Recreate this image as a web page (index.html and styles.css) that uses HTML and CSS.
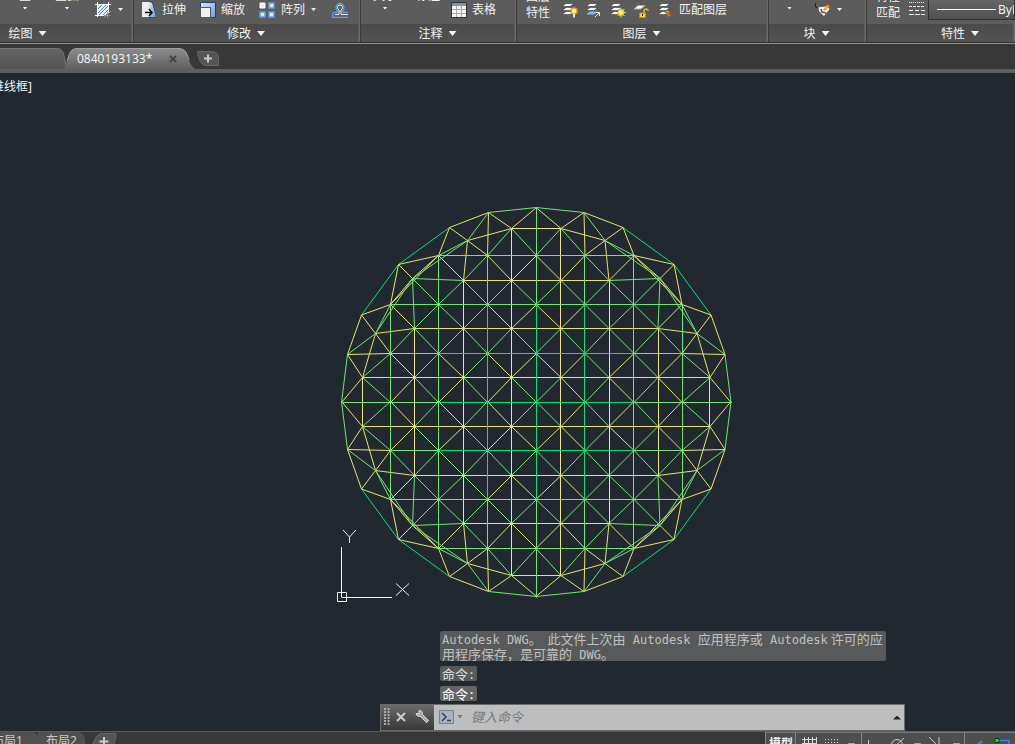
FILE: index.html
```html
<!DOCTYPE html>
<html lang="zh-CN">
<head>
<meta charset="utf-8">
<title>0840193133</title>
<link rel="stylesheet" href="styles.css">
</head>
<body>
<svg class="defs" aria-hidden="true">
  <defs>
    <linearGradient id="blueFill" x1="0" y1="0" x2="1" y2="1"><stop offset="0" stop-color="#dce9fb"/><stop offset="1" stop-color="#5f9be8"/></linearGradient>
    <linearGradient id="tabFill" x1="0" y1="0" x2="0" y2="1"><stop offset="0" stop-color="#8c8c8c"/><stop offset="1" stop-color="#5e5e5e"/></linearGradient>
    <linearGradient id="tabDim" x1="0" y1="0" x2="0" y2="1"><stop offset="0" stop-color="#646464"/><stop offset="1" stop-color="#545454"/></linearGradient>
    <g id="stack">
      <path d="M5 1.500h8l-4 3H1zM5 5.500h8l-4 3H1zM5 9.500h8l-4 3H1z" fill="#fff" stroke="#333" stroke-width=".6"/>
    </g>
  </defs>
</svg>

<header class="ribbon">
  <section class="panel first">
    <div class="tools tools-draw">
      <button class="tall circle"><span>圆</span><i class="caret"></i></button>
      <button class="tall arc"><span>圆弧</span><i class="caret"></i></button>
      <button class="tool hatch" aria-label="图案填充">
        <svg width="18" height="18" viewBox="0 0 18 18"><path d="M4 4h10v10H4z" fill="#e8f0fb"/><path d="M4 8l4-4M4 12l8-8M5 14l9-9M9 14l5-5M12 14l2-2" stroke="#4f83d6" stroke-width="1"/><path d="M3.500 1v15M14.500 1v11M1 3.500h16M1 14.500h10" stroke="#fff" stroke-width="1" fill="none"/><path d="M10 17l7-7M10 14.500h6M13.500 11v6" stroke="#5b9bf0" stroke-width="1"/></svg>
        <i class="caret"></i>
      </button>
    </div>
    <button class="panel-title">绘图<i class="caret big"></i></button>
  </section>

  <section class="panel">
    <div class="tools">
      <button class="tool"><svg width="16" height="17" viewBox="0 0 16 17"><path d="M7 1h4l4 15H7z" fill="#8fb9e8" stroke="#1f3d66"/><path d="M1 1h7v15H1z" fill="#eee"/><path d="M8 1l3 1 4 14H8z" fill="url(#blueFill)"/><path d="M4 11.500h6M8 8l3 3.500L8 15" stroke="#000" stroke-width="1.500" fill="none"/></svg>拉伸</button>
      <button class="tool"><svg width="16" height="16" viewBox="0 0 16 16"><path d="M.5.500h15v15h-5v-10H.5z" fill="url(#blueFill)" stroke="#26406b"/><path d="M.5 5.500h10v10H.5z" fill="#f1f1f1" stroke="#555"/></svg>缩放</button>
      <button class="tool array"><svg width="16" height="16" viewBox="0 0 16 16"><path d="M1 1h5v5H1z" fill="#eee" stroke="#fff"/><path d="M10 1h5v5h-5zM1 10h5v5H1zM10 10h5v5h-5z" fill="#dfeafa" stroke="#5f9cf3" stroke-width="1.500"/></svg>阵列<i class="caret"></i></button>
      <button class="tool offset" aria-label="偏移"><svg width="16" height="16" viewBox="0 0 16 16"><path d="M16 15.300H.7v-3q0-2 2-2h2.500V8.500Q4 7.500 4 5.500a4 4 0 0 1 8 0q0 2-1.200 3v1.800H16" fill="none" stroke="#5f9cf3" stroke-width="1.300"/><path d="M16 12.500H9V8q1.500-1 1.500-2.500a2.500 2.500 0 0 0-5 0Q5.500 7 7 8v4.500H3" fill="none" stroke="#eee" stroke-width="1"/></svg></button>
    </div>
    <button class="panel-title">修改<i class="caret big"></i></button>
  </section>

  <section class="panel">
    <div class="tools tools-note">
      <button class="tall"><span>文字</span><i class="caret"></i></button>
      <button class="tall dim"><span>标注</span></button>
      <button class="tool table-tool"><svg width="16" height="16" viewBox="0 0 16 16"><path d="M.5.500h15v15H.5z" fill="#f4f4f4" stroke="#333"/><path d="M1 1h14v3H1z" fill="#7d93b3"/><path d="M1 7.500h14M1 11.500h14M5.500 4v11M10.500 4v11" stroke="#aaa"/></svg>表格</button>
    </div>
    <button class="panel-title">注释<i class="caret big"></i></button>
  </section>

  <section class="panel">
    <div class="tools tools-layer">
      <button class="two-line">图层<br>特性</button>
      <div class="icon-row">
        <button class="tool" aria-label="关闭图层"><svg width="17" height="16" viewBox="0 0 17 16"><use href="#stack"/><circle cx="13" cy="9" r="3" fill="#fff2a0" stroke="#f29a1f" stroke-width="1.500"/><path d="M13 11.500v4" stroke="#ddd" stroke-width="2"/></svg></button>
        <button class="tool" aria-label="置为当前"><svg width="17" height="16" viewBox="0 0 17 16"><use href="#stack"/><path d="M5 9.500h8l-4 3H1z" fill="#80b4f5"/><path d="M10 15l4-4M11 10.500h3.500V14" stroke="#eee" fill="none"/></svg></button>
        <button class="tool" aria-label="冻结图层"><svg width="17" height="16" viewBox="0 0 17 16"><use href="#stack"/><path d="M12 5.500v10M7 10.500h10M8.500 7l7 7M15.500 7l-7 7" stroke="#f7dc65" stroke-width="1"/><circle cx="12" cy="10.500" r="3" fill="#fff06a" stroke="#f2b93b"/></svg></button>
        <button class="tool" aria-label="锁定图层"><svg width="17" height="16" viewBox="0 0 17 16"><path d="M5 3.500h7L8 7H1z" fill="#fff" stroke="#aaa"/><path d="M11 11V9q0-2 2-2t2 2" stroke="#f0b90c" stroke-width="1.500" fill="none"/><path d="M6.500 11h6v4.500h-6z" fill="#ffd633" stroke="#c98b00"/><path d="M9.500 12v2" stroke="#000"/></svg></button>
        <button class="tool match"><svg width="17" height="16" viewBox="0 0 17 16"><use href="#stack"/><path d="M7 10l5 5 3-3-4-4z" fill="#c47a32"/><path d="M12 11l2 1 2-3" stroke="#9c4c16" stroke-width="2" fill="none"/></svg>匹配图层</button>
      </div>
    </div>
    <button class="panel-title">图层<i class="caret big"></i></button>
  </section>

  <section class="panel">
    <div class="tools tools-block">
      <button class="tall" aria-label="插入"><i class="caret"></i></button>
      <button class="tool attr" aria-label="编辑属性"><svg width="18" height="16" viewBox="0 0 18 16"><path d="M1.500 1v4l3 1" stroke="#222" fill="none"/><path d="M4 5l9-1 3 3-6 7.500-5-5z" fill="#f5f5f5" stroke="#444" stroke-width=".6"/><path d="M7 7l1 3 4 1" stroke="#555" fill="none" stroke-width="1.500"/><path d="M9 8l5-6 2 2-5 5z" fill="#f3a72b"/><path d="M14 2l2 2" stroke="#d43b20" stroke-width="2"/></svg><i class="caret"></i></button>
    </div>
    <button class="panel-title">块<i class="caret big"></i></button>
  </section>

  <section class="panel last">
    <div class="tools tools-props">
      <button class="two-line">特性<br>匹配</button>
      <svg class="linetypes" width="16" height="16" viewBox="0 0 16 16"><path d="M0 2.500h16" stroke="#eee" stroke-dasharray="1 1"/><path d="M0 6.500h16" stroke="#eee" stroke-dasharray="3 1"/><path d="M0 10.500h16" stroke="#eee" stroke-dasharray="4 2"/><path d="M0 14.500h16" stroke="#eee" stroke-dasharray="5 1"/></svg>
      <button class="linetype"><span class="sample"></span>ByLayer</button>
    </div>
    <button class="panel-title">特性<i class="caret big"></i></button>
  </section>
</header>

<nav class="tabs">
  <button class="tab previous" aria-label="上一图形">
    <svg width="68" height="22" viewBox="0 0 68 22"><path d="M-2 .500h59q6 0 7 7l1 5q1 5 3 9.500H-2z" fill="url(#tabDim)" stroke="#757575"/></svg>
  </button>
  <button class="tab active">
    <svg width="138" height="22" viewBox="0 0 138 22"><path d="M0 22q3-2 5-9l2-6q2-6.500 8-6.500h102q6 0 8 6l3 8q2 6 8 7.500z" fill="url(#tabFill)"/><path d="M5 13l2-6q2-6.500 8-6.500h102q6 0 8 6l2 5" fill="none" stroke="#a0a0a0"/></svg>
    <span class="tab-name">0840193133*</span>
    <svg class="tab-close" width="8" height="8" viewBox="0 0 8 8"><path d="M1 1l6 6M7 1L1 7" stroke="#454545" stroke-width="2"/></svg>
  </button>
  <button class="new-tab" aria-label="新图形">
    <svg width="22" height="15" viewBox="0 0 22 15"><path d="M.5.500h14q7 0 7 7v7H9Q2 14 .5.500z" fill="#545454" stroke="#666"/><path d="M11 3.500v8M7 7.500h8" stroke="#ccc" stroke-width="2"/></svg>
  </button>
</nav>

<main class="canvas">
  <div class="view-label">二维线框]</div>

  <svg class="mesh" width="400" height="400" viewBox="336 200 400 400">
    <defs>
      <g id="quarter">
        <path class="teal" d="M449.500 227.500L398.500 264.500 361.500 315"/>
        <path class="yellow" d="M488.500 212.500L449.500 227.500M361.500 315L347.500 354.500
          M536.500 207.500L511.500 228.500 488.500 212.500L487.500 255.500M449.500 227.500L467.500 240.500M449.500 227.500L438.500 255.500 398.500 264.500 390.500 304.500 361.500 315 375.500 333.500
          M398.500 264.500L412.500 278.500M347.500 354.500L362.500 377.500 341.500 402.500M347.500 354.500L390.500 353.500
          M511.500 228.500L467.500 240.500M375.500 333.500L362.500 377.500M438.500 255.500L412.500 278.500 390.500 304.500zM467.500 240.500L487.500 255.500M467.500 240.500L463.500 280.500M375.500 333.500L390.500 353.500M375.500 333.500L414.500 328.500
          M438.500 255.500L463.500 280.500M487.500 255.500L511.500 280.500 536.500 255.500
          M390.500 304.500L414.500 328.500M487.500 304.500L511.500 328.500 536.500 304.500
          M390.500 353.500L414.500 377.500 390.500 402.500M438.500 353.500L463.500 377.500 438.500 402.500M487.500 353.500L511.500 377.500 536.500 353.500M511.500 377.500L487.500 402.500"/>
        <path class="green" d="M536.500 207.500L488.500 212.500 467.500 240.500 412.500 278.500 375.500 333.500 347.500 354.500 341.500 402.500
          M467.500 240.500L438.500 255.500M375.500 333.500L390.500 304.500M463.500 280.500L412.500 278.500 414.500 328.500M412.500 278.500L438.500 304.500
          M487.500 255.500L511.500 228.500 536.500 255.500M487.500 255.500L463.500 280.500 438.500 304.500M463.500 280.500L487.500 304.500 511.500 280.500 536.500 304.500
          M390.500 353.500L414.500 328.500 438.500 304.500 463.500 328.500 487.500 304.500M414.500 328.500L438.500 353.500 463.500 328.500 487.500 353.500 511.500 328.500 536.500 353.500
          M390.500 353.500L362.500 377.500 390.500 402.500M438.500 353.500L414.500 377.500 438.500 402.500M487.500 353.500L463.500 377.500 487.500 402.500M511.500 377.500L536.500 402.500"/>
      </g>
    </defs>
    <use href="#quarter"/>
    <use href="#quarter" transform="translate(1072.500 0) scale(-1 1)"/>
    <use href="#quarter" transform="translate(0 804) scale(1 -1)"/>
    <use href="#quarter" transform="translate(1072.500 804) scale(-1 -1)"/>
    <path class="yellow" d="M511.500 228.500H560.500M463.500 280.500H609.500M414.500 328.500H658.500M362.500 377.500H709.500M362.500 426.500H709.500M414.500 475.500H658.500M463.500 523.500H609.500M511.500 575.500H560.500"/>
    <path class="pale" d="M362.500 377.500V426.500M414.500 328.500V475.500M463.500 280.500V523.500M511.500 228.500V575.500M560.500 228.500V575.500M609.500 280.500V523.500M658.500 328.500V475.500M709.500 377.500V426.500"/>
    <path class="green" d="M438.500 255.500H633.500M390.500 304.500H682.500M390.500 353.500H682.500M341.500 402.500H731.500M390.500 450.500H682.500M390.500 499.500H682.500M438.500 548.500H633.500
      M390.500 304.500V499.500M438.500 255.500V548.500M487.500 255.500V548.500M536.500 207.500V597.500M584.500 255.500V548.500M633.500 255.500V548.500M682.500 304.500V499.500"/>
    <path class="teal" d="M438.500 353.500H633.500M438.500 402.500H633.500M438.500 450.500H633.500M487.500 304.500V499.500M536.500 304.500V499.500M584.500 304.500V499.500"/>
  </svg>

  <svg class="ucs" width="76" height="76" viewBox="336 528 76 76"><path d="M341.500 547V592M347 597.500H392M337.500 592.500h9v9h-9zM341.500 592v5.500H347M343 530l6.500 7 6.500-7M349.500 537v6M396 583.500l13 12M409 583.500l-13 12" fill="none" stroke="#f2f2f2"/></svg>

  <div class="command">
    <div class="history"><span class="latin">Autodesk DWG</span>。  此文件上次由<span class="latin"> Autodesk </span>应用程序或<span class="latin"> Autodesk</span> 许可的应
用程序保存，是可靠的<span class="latin"> DWG</span>。</div>
    <div class="prompt">命令<span class="latin">:</span></div>
    <div class="prompt newest">命令<span class="latin">:</span></div>
    <form class="command-line">
      <div class="grip">
        <svg width="6" height="18" viewBox="0 0 6 18"><path d="M1 0v18M4.500 0v18" stroke="#aaa" stroke-width="2" stroke-dasharray="2 1"/></svg>
        <button type="button" aria-label="关闭"><svg width="10" height="10" viewBox="0 0 10 10"><path d="M1 1l8 8M9 1L1 9" stroke="#ccc" stroke-width="2"/></svg></button>
        <button type="button" aria-label="自定义"><svg width="15" height="15" viewBox="0 0 15 15"><path d="M4 1.500v3H1Q1.500 8 5.500 7.500l6 6.200 2.200-2.200-6.200-6Q8 1.500 4 1.500z" fill="#a5abb3" stroke="#eee" stroke-width=".8"/></svg></button>
      </div>
      <button class="prompt-icon" type="button" aria-label="最近使用的命令"><svg width="15" height="14" viewBox="0 0 15 14"><path d="M.5.500h14v13H.5z" fill="#a9b2c0" stroke="#77808c"/><path d="M3 3l4 4-4 4M8 10.500h4" stroke="#36404d" fill="none" stroke-width="1.500"/></svg><i class="caret gray"></i></button>
      <input type="text" aria-label="命令" placeholder="键入命令">
      <button class="expand" type="button" aria-label="展开"></button>
    </form>
  </div>
</main>

<footer class="status">
  <button class="layout one">布局1</button>
  <button class="layout">布局2</button>
  <button class="layout add" aria-label="新建布局"><svg width="26" height="16" viewBox="0 0 26 16"><path d="M0 16Q4 2 10 .5h15q0 10-6 15.500z" fill="#545454" stroke="#6a6a6a"/><path d="M13 4v9M8.500 8.500h9" stroke="#ccc" stroke-width="2"/></svg></button>
  <div class="status-tools">
    <button class="cell model">模型</button>
    <button class="cell grid-cell" aria-label="栅格"><svg width="56" height="16" viewBox="0 0 56 16"><path d="M3.500 4v12M7.500 4v12M11.500 4v12M15.500 4v12M1 6.500h14M1 10.500h14" stroke="#ddd"/><path d="M24 6.500h15M24 9.500h15" stroke="#ddd" stroke-dasharray="1 2"/><path d="M47 10.500h7l-3.500 4z" fill="#fff"/></svg></button>
    <button class="cell snap-cell" aria-label="正交"><svg width="100" height="16" viewBox="0 0 100 16"><path d="M6.500 7v10M6.500 15.500h7" stroke="#ccc"/><circle cx="35" cy="12" r="5.500" fill="none" stroke="#ccc"/><path d="M29 17L42 5M67 4l10 10V4" fill="none" stroke="#ccc"/><path d="M52 10.500h7l-3.500 4zM91 10.500h7l-3.500 4z" fill="#fff"/></svg></button>
    <button class="cell track-cell" aria-label="对象捕捉"><svg width="48" height="16" viewBox="0 0 48 16"><path d="M8 16l9-8" stroke="#2d8cf0" stroke-width="2"/><path d="M32 7.500h12V17" fill="none" stroke="#2d8cf0" stroke-width="1.500"/><path d="M30 5.500h4v4h-4z" fill="#12e03a" stroke="#073b10"/></svg></button>
  </div>
</footer>
</body>
</html>
```

FILE: styles.css
```css
* { box-sizing: border-box; }
body {
  margin: 0;
  height: 100vh;
  display: flex;
  flex-direction: column;
  overflow: hidden;
  background: #212830;
  color: #f2f2f2;
  font: 12px/16px "Noto Sans", "Noto Sans CJK SC", sans-serif;
}
button { margin: 0; padding: 0; border: 0; background: none; color: inherit; font: inherit; white-space: nowrap; }
svg { display: block; flex: none; }
.defs { position: absolute; width: 0; height: 0; }

.caret { flex: none; width: 5px; height: 3px; background: #f2f2f2; clip-path: polygon(0 0, 100% 0, 50% 100%); }
.caret.big { width: 8px; height: 5px; }
.caret.gray { width: 6px; height: 4px; background: #777; }

/* ribbon */
.ribbon {
  flex: none;
  display: grid;
  grid-template-columns: 134px 227px 156px 252px 98px 1fr;
  border-bottom: 1px solid #8e8e8e;
  background: #5c5c5c;
  overflow: hidden;
}
.panel { border-right: 1px solid #3a3a3a; border-bottom: 1px solid #333; box-shadow: inset -1px 0 #6a6a6a; min-width: 0; }
.panel.last { border-right: 0; }
.tools { display: flex; align-items: center; gap: 14px; height: 24px; padding: 0 0 5px 7px; }
.tool { display: flex; align-items: center; gap: 5px; }
.panel-title {
  display: flex;
  width: calc(100% - 2px);
  height: 18px;
  padding-top: 1px;
  align-items: center;
  justify-content: center;
  gap: 6px;
  background: linear-gradient(#4a4a4a, #525252);
}
/* these two panels continue beyond the window edge */
.first .panel-title { padding-right: 76px; }
.last .panel-title { padding-left: 40px; }
.tall { display: flex; flex-direction: column; align-items: center; justify-content: flex-end; height: 24px; padding-bottom: 12px; gap: 5px; line-height: 12px; }
.tall span { margin-top: -12px; }
.tools-draw { padding-left: 19px; gap: 0; }
.circle { width: 12px; }
.arc { margin-left: 24px; }
.hatch { margin-left: 15px; gap: 6px; }
.array { gap: 6px; }
.offset { margin-left: 2px; }
.tools-note { padding-left: 12px; gap: 0; }
.dim { margin-left: 19px; padding-bottom: 20px; }
.table-tool { margin-left: 11px; }
.tools-layer { gap: 11px; padding-left: 9px; }
.two-line { align-self: flex-start; margin-top: -11px; line-height: 16px; }
.icon-row { display: flex; gap: 7px; }
.tools-block { padding-left: 18px; gap: 22px; }
.attr { gap: 5px; }
.tools-props { padding-left: 9px; gap: 9px; }
.linetype {
  align-self: flex-start;
  display: flex;
  align-items: center;
  gap: 2px;
  width: 120px;
  height: 20px;
  margin-left: -6px;
  padding-left: 8px;
  border: 1px solid #303030;
  border-top: 0;
  background: linear-gradient(#666, #505050);
  overflow: hidden;
}
.linetypes { align-self: flex-start; }
.sample { flex: none; width: 59px; border-top: 1px solid #fff; }

/* drawing tabs */
.tabs { flex: none; display: flex; height: 29px; padding-top: 4px; background: #383838; border-bottom: 4px solid #5e5e5e; }
.tab { position: relative; display: flex; height: 22px; }
.tab.active { width: 138px; margin-left: -6px; padding-left: 15px; align-items: center; }
.tab.active > svg:first-child { position: absolute; left: 0; top: 0; }
.tab-name { position: relative; }
.tab-close { position: relative; margin-left: 17px; }
.new-tab { align-self: flex-start; margin: 3px 0 0 -3px; }

/* drawing area */
.canvas { position: relative; flex: 1; min-height: 0; overflow: hidden; }
.view-label { margin: 6px 0 0 -20px; }
.mesh { position: absolute; left: 336px; top: 127px; }
.mesh path { fill: none; stroke-width: 1; }
.mesh .green { stroke: #6ce873; }
.mesh .yellow { stroke: #e8e36c; }
.mesh .pale { stroke: #ece983; }
.mesh .teal { stroke: #00e676; }
.ucs { position: absolute; left: 336px; top: 455px; }

.command {
  position: absolute;
  left: 380px;
  bottom: 0;
  width: 525px;
  display: flex;
  flex-direction: column;
  align-items: flex-start;
  font: 13px/15px "Noto Sans CJK SC", sans-serif;
}
.latin { font-family: "DejaVu Sans Mono", monospace; font-size: 12px; line-height: 8px; }
.history, .prompt { margin: 0 0 5px 60px; padding: 0 2px; border-radius: 2px; background: #57595a; color: #c0c0c0; white-space: pre; }
.history { width: 446px; }
.prompt { color: #dcdcdc; }
.prompt.newest { margin-bottom: 3px; background: #646464; color: #fff; }
.command-line { display: flex; width: 100%; height: 27px; border: 1px solid #6b6b6b; background: #bdbec0; }
.grip { display: flex; align-items: center; gap: 6px; width: 53px; padding: 0 0 2px 3px; background: linear-gradient(#6a6a6a, #383838); }
.grip button + button { margin-left: 3px; }
.prompt-icon { display: flex; align-items: center; gap: 3px; margin-left: 5px; padding-bottom: 2px; }
.command-line input { flex: 1; min-width: 0; padding: 0 0 3px 8px; border: 0; outline: 0; background: none; font: italic 13px/15px "Noto Sans CJK SC", sans-serif; color: #333; }
.command-line input::placeholder { color: #77797c; opacity: 1; }
.expand { align-self: center; width: 8px; height: 4px; margin-right: 3px; background: #222; clip-path: polygon(50% 0, 100% 100%, 0 100%); }

/* status bar */
.status { flex: none; display: flex; align-items: flex-start; height: 13px; background: #383838; border-top: 1px solid #5a5a5a; overflow: hidden; }
.layout { height: 18px; padding: 0 8px; background: #505050; color: #c8c8c8; border-radius: 0 8px 0 0; }
.layout.one { margin-left: -16px; padding-right: 16px; }
.layout + .layout { margin-left: -1px; }
.layout.add { padding: 0; background: none; margin-left: 6px; }
.status-tools { display: flex; margin-left: auto; background: #4e4e4e; border-top: 1px solid #7a7a7a; }
.cell { display: flex; align-items: flex-start; height: 17px; border-left: 1px solid #858585; overflow: hidden; }
.model { width: 30px; padding: 4px 0 0 3px; font-weight: bold; line-height: 14px; }
.grid-cell { width: 66px; padding-left: 5px; }
.snap-cell { width: 103px; }
.track-cell { width: 51px; }
```
